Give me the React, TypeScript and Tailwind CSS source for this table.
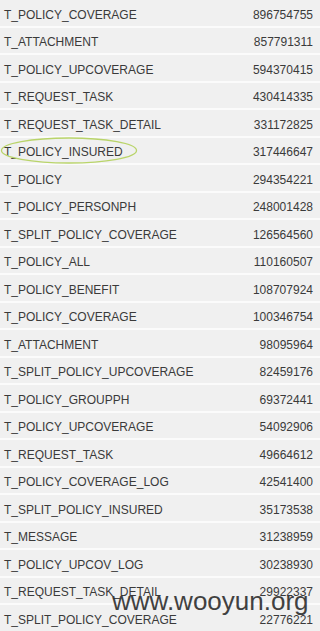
const rows: [string, string][] = [
  ['T_POLICY_COVERAGE', '896754755'],
  ['T_ATTACHMENT', '857791311'],
  ['T_POLICY_UPCOVERAGE', '594370415'],
  ['T_REQUEST_TASK', '430414335'],
  ['T_REQUEST_TASK_DETAIL', '331172825'],
  ['T_POLICY_INSURED', '317446647'],
  ['T_POLICY', '294354221'],
  ['T_POLICY_PERSONPH', '248001428'],
  ['T_SPLIT_POLICY_COVERAGE', '126564560'],
  ['T_POLICY_ALL', '110160507'],
  ['T_POLICY_BENEFIT', '108707924'],
  ['T_POLICY_COVERAGE', '100346754'],
  ['T_ATTACHMENT', '98095964'],
  ['T_SPLIT_POLICY_UPCOVERAGE', '82459176'],
  ['T_POLICY_GROUPPH', '69372441'],
  ['T_POLICY_UPCOVERAGE', '54092906'],
  ['T_REQUEST_TASK', '49664612'],
  ['T_POLICY_COVERAGE_LOG', '42541400'],
  ['T_SPLIT_POLICY_INSURED', '35173538'],
  ['T_MESSAGE', '31238959'],
  ['T_POLICY_UPCOV_LOG', '30238930'],
  ['T_REQUEST_TASK_DETAIL', '29922337'],
  ['T_SPLIT_POLICY_COVERAGE', '22776221'],
];

export default function App() {
  return (
    <div className="relative w-[320px] h-[631px] overflow-hidden bg-[#f1f1f1] font-['Liberation_Sans',Arial,sans-serif] text-[12px] text-[#3a3a3a]">
      {rows.map(([name, count], i) => (
        <div
          key={i}
          className="flex h-[27.5px] items-center justify-between border-b-2 border-[#fbfbfb] bg-[#f0f0f0] pl-[4px] pr-[7px] pt-[4px]"
        >
          <span>{name}</span>
          <span>{count}</span>
        </div>
      ))}

      {/* hand-drawn marker round T_POLICY_INSURED */}
      <svg className="absolute left-0 top-[136px]" width="140" height="29" viewBox="0 0 140 29">
        <ellipse cx="69" cy="14.5" rx="67.5" ry="12.5" fill="none" stroke="#b9d46a" strokeWidth="1.3" />
      </svg>

      {/* watermark */}
      <div className="absolute left-[112px] top-[588px] text-[26px] leading-none text-[#2e2e2e] opacity-90">
        www.wooyun.org
      </div>
    </div>
  );
}
